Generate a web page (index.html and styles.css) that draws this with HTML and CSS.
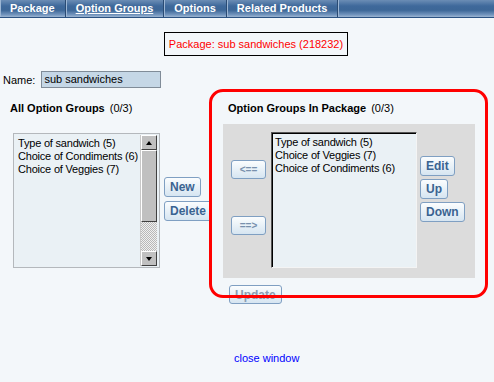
FILE: index.html
```html
<!DOCTYPE html>
<html lang="en">
<head>
    <meta charset="UTF-8">
    <title>Option Groups</title>
    <link rel="stylesheet" href="styles.css">
</head>
<body>
    <div class="tabs">
        <a class="tab">Package</a>
        <a class="tab active">Option Groups</a>
        <a class="tab">Options</a>
        <a class="tab">Related Products</a>
    </div>

    <div class="package-title">Package: sub sandwiches (218232)</div>

    <div class="name-row">
        <label>Name:</label>
        <div class="name-input">sub sandwiches</div>
    </div>

    <div class="main">
        <div class="col-left">
            <h2>All Option Groups <span>(0/3)</span></h2>
            <div class="list-row">
                <div class="listbox listbox-all">
                    <div class="items">
                        <div>Type of sandwich (5)</div>
                        <div>Choice of Condiments (6)</div>
                        <div>Choice of Veggies (7)</div>
                    </div>
                    <div class="scrollbar">
                        <div class="sb-btn up"></div>
                        <div class="sb-thumb"></div>
                        <div class="sb-track"></div>
                        <div class="sb-btn down"></div>
                    </div>
                </div>
                <div class="btn-col side">
                    <button class="btn">New</button>
                    <button class="btn">Delete</button>
                </div>
            </div>
        </div>

        <div class="col-right">
            <h2>Option Groups In Package <span>(0/3)</span></h2>
            <div class="panel">
                <div class="btn-col move">
                    <button class="btn arrow">&lt;==</button>
                    <button class="btn arrow">==&gt;</button>
                </div>
                <div class="listbox listbox-pkg">
                    <div>Type of sandwich (5)</div>
                    <div>Choice of Veggies (7)</div>
                    <div>Choice of Condiments (6)</div>
                </div>
                <div class="btn-col order">
                    <button class="btn">Edit</button>
                    <button class="btn">Up</button>
                    <button class="btn">Down</button>
                </div>
            </div>
            <button class="btn update">Update</button>
        </div>
    </div>

    <div class="footer"><a href="#">close window</a></div>

    <div class="highlight"></div>
</body>
</html>
```

FILE: styles.css
```css
body {
    margin: 0;
    height: 382px;
    background-color: #f3f7fa;
    font-family: 'Liberation Sans', Arial, sans-serif;
    font-size: 11px;
    color: #000;
    position: relative;
    overflow: hidden;
}

.tabs {
    display: flex;
    height: 17px;
    background: linear-gradient(#6b8db5 0%, #3f699b 35%, #3d6797 60%, #6f92bb 85%, #9bb4d1 100%);
    border-bottom: 1px solid #2b5282;
}

.tab {
    padding: 0 10px;
    line-height: 17px;
    color: #fff;
    font-weight: bold;
    font-size: 11px;
    border-right: 1px solid #2a4b73;
    box-shadow: 1px 0 0 #9cb6d4;
}

.tab:first-child { padding-left: 9px; border-left: 1px solid #9cb6d4; }

.tab.active { text-decoration: underline; }

.package-title {
    display: inline-block;
    margin: 14px 0 0 164px;
    width: 182px;
    height: 22px;
    line-height: 22px;
    border: 1px solid #000;
    color: #f00;
    text-align: center;
}

.name-row {
    display: flex;
    align-items: center;
    margin-top: 15px;
    padding-left: 3px;
    gap: 6px;
}

.name-input {
    width: 116px;
    height: 15px;
    line-height: 15px;
    padding-left: 2px;
    background-color: #c5d7e6;
    border: 1px solid #808c98;
}

.main {
    display: flex;
    margin-top: 13px;
}

h2 {
    margin: 0;
    font-size: 11px;
    font-weight: bold;
    line-height: 14px;
}

h2 span { font-weight: normal; margin-left: 2px; }

.col-left {
    width: 213px;
    padding-left: 10px;
}

.list-row {
    display: flex;
    margin-top: 18px;
    margin-left: 3px;
}

.listbox {
    background-color: #eaf1f5;
    line-height: 13px;
    white-space: nowrap;
    letter-spacing: -0.2px;
}

.listbox-all {
    display: flex;
    width: 145px;
    height: 133px;
    border: 1px solid #b4b8bc;
}

.listbox-all .items {
    flex: 1;
    overflow: hidden;
    padding: 3px 0 0 4px;
}

.scrollbar {
    display: flex;
    flex-direction: column;
    width: 16px;
    margin: 1px 2px 1px 0;
    border-left: 1px solid #c8c8c8;
}

.sb-btn {
    height: 13px;
    background-color: #c0c0c0;
    border: 1px solid;
    border-color: #fff #404040 #404040 #fff;
    position: relative;
}

.sb-btn::after {
    content: '';
    position: absolute;
    left: 4px;
    top: 5px;
    border-left: 3px solid transparent;
    border-right: 3px solid transparent;
}

.sb-btn.up::after { border-bottom: 4px solid #000; }
.sb-btn.down::after { border-top: 4px solid #000; top: 5px; }

.sb-thumb {
    height: 70px;
    background-color: #c0c0c0;
    border: 1px solid;
    border-color: #fff #404040 #404040 #fff;
}

.sb-track {
    flex: 1;
    background-color: #fff;
    background-image: repeating-conic-gradient(#b8b8b8 0 25%, #f0f0f0 0 50%);
    background-size: 2px 2px;
}

.btn-col {
    display: flex;
    flex-direction: column;
    align-items: flex-start;
    gap: 4px;
}

.btn-col.side {
    margin: 44px 0 0 4px;
}

.btn {
    height: 20px;
    padding: 0 5px;
    font-family: 'Liberation Sans', Arial, sans-serif;
    font-size: 12px;
    font-weight: bold;
    color: #3a6391;
    background: linear-gradient(#fbfdfe, #d6e5f1);
    border: 1px solid #7f9fc2;
    border-radius: 3px;
}

.col-right h2 { padding-left: 5px; }

.panel {
    display: flex;
    width: 252px;
    height: 154px;
    margin-top: 9px;
    box-sizing: border-box;
    padding: 8px 0 0 8px;
    background-color: #dcdcdc;
}

.btn-col.move {
    width: 35px;
    gap: 37px;
    margin-top: 28px;
}

.btn.arrow {
    width: 35px;
    height: 19px;
    font-size: 10px;
    color: #7890ad;
}

.listbox-pkg {
    width: 141px;
    height: 131px;
    margin-left: 5px;
    padding: 3px 0 0 3px;
    border: 1px solid;
    border-color: #555 #f4f4f4 #f4f4f4 #555;
    box-shadow: inset 1px 1px 0 #000;
}

.btn-col.order {
    margin: 24px 0 0 3px;
    gap: 3px;
}

.btn.update {
    margin: 7px 0 0 6px;
    height: 19px;
    color: #8b9db3;
}

.footer {
    margin: 48px 0 0 234px;
}

.footer a {
    color: #0000ff;
    text-decoration: none;
}

.highlight {
    position: absolute;
    left: 209px;
    top: 89px;
    width: 273px;
    height: 203px;
    border: 3px solid #f00;
    border-radius: 14px;
}
```
